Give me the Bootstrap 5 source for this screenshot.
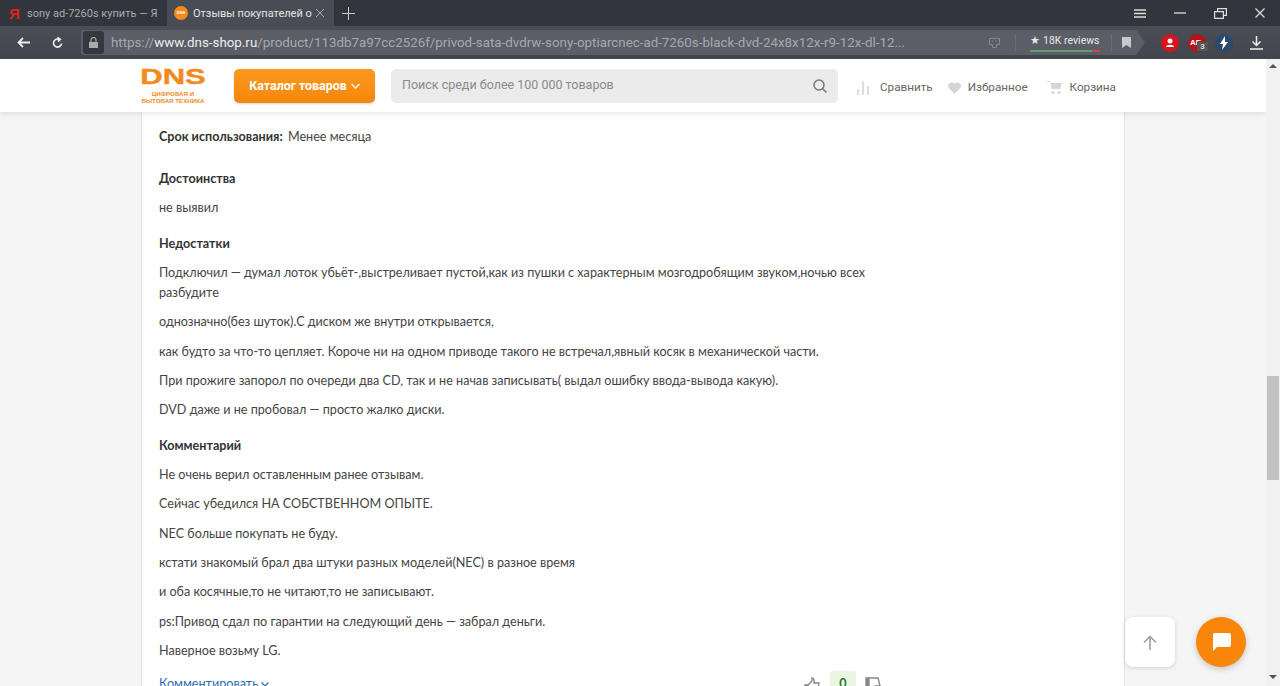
<!doctype html>
<html lang="ru"><head><meta charset="utf-8"><title>Отзывы покупателей</title>
<link href="https://cdn.jsdelivr.net/npm/bootstrap@5.3.0/dist/css/bootstrap.min.css" rel="stylesheet">
<style>
html,body{height:686px;overflow:hidden}
body{font-family:Roboto,"Liberation Sans",sans-serif;color:#333;background:#f5f5f5;position:relative}
.tabbar{height:26px;background:#33353d;color:#a9abb0;font:11px Roboto,sans-serif}
.tabitem{width:167px;height:26px;padding-left:9px}
.tabitem.on{background:#4a4c55;color:#e4e4e6;padding-left:7px}
.tabitem .ya{color:#d8261c;font:700 15px "Liberation Sans",sans-serif;width:18px;flex:none}
.favdot{width:14px;height:14px;border-radius:50%;background:#f28a1e;margin-right:5px;flex:none;color:#fff;font:700 4px/14px "Liberation Sans",sans-serif;text-align:center}
.tabtext{white-space:nowrap;width:122px}
.winbtn{width:40px;display:flex;justify-content:center}
.addrbar{height:33px;background:linear-gradient(#4c4e57,#43454d)}
.navico{width:46px;display:flex;justify-content:center}
.reload{margin-left:5.5px;margin-right:18.5px}
.urlbox{width:1064px;height:25px;background:#5c5e67;border-radius:3px 0 0 3px;clip-path:polygon(0 0,1055px 0,100% 50%,1055px 100%,0 100%);color:#a6a8ad;font:13.35px Roboto,sans-serif;padding-left:2px}
.lockbox{width:21px;height:23px;background:#363840;border-radius:3px;margin-right:7px}
.urltext{width:878px;white-space:nowrap}
.urltext b{font-weight:400;color:#eee}
.sepbar{width:1px;height:17px;background:#6b6d75}
.reviews{color:#e8e8e8;font-size:10.5px;width:70px;line-height:13px;border-bottom:2px solid #5fa06e;margin:0 11px 0 14px;position:relative;padding-bottom:3px;white-space:nowrap;text-align:center}
.reviews::after{content:"";position:absolute;right:0;bottom:-2px;width:8px;height:2px;background:#c4503f}
.extico{width:18px;height:18px;border-radius:50%;position:relative;color:#fff;font:700 8px/17px "Liberation Sans",sans-serif;text-align:left;padding-left:2px}
.extcount{position:absolute;right:-2px;bottom:1px;width:11px;height:9px;background:#555;color:#ddd;font:700 8px/9px "Liberation Sans",sans-serif;text-align:center}
.pagebox{height:627px}
.pagemain{width:1266px;height:627px;overflow:hidden;position:relative}
.sitehead{height:53px;background:#fff;box-shadow:0 2px 6px rgba(0,0,0,.1);padding-left:141px;position:relative;z-index:2}
.logobox{width:64px;color:#f28a1e;text-align:center;margin-right:29px;padding-top:1px}
.logomain{font:900 22.8px/17px "Liberation Sans",sans-serif;transform:scaleX(1.36);height:17px;-webkit-text-stroke:.4px #f28a1e}
.logosub{font:700 6.2px/7px "Liberation Sans",sans-serif;white-space:nowrap;margin-top:5px}
.catbtn{width:141px;height:34px;background:linear-gradient(#fb9a20,#f7860b);border:0;border-radius:5px;color:#fff;font:700 12.4px Roboto,sans-serif;box-shadow:0 1px 2px rgba(0,0,0,.15);padding:0}
.searchbox{width:447px;height:34px;background:#ebebeb;border-radius:5px;margin-left:16px;padding:0 11px;color:#8a8a8a;font-size:12.5px}
.headlink{color:#666;font-size:11.7px;white-space:nowrap;margin-top:5px}
.reviewcard{margin-left:141px;width:984px;background:#fff;border-left:1px solid #e4e4e4;border-right:1px solid #e4e4e4;padding:15px 17px 0;height:574px;overflow:hidden;font-family:Lato,Roboto,sans-serif;font-size:12.6px;line-height:20px;color:#444}
.reviewcard p{margin:0 0 9.3px;width:712px}
.reviewcard h6{font-size:12.6px;line-height:20px;font-weight:700;color:#333;margin:0 0 9.3px}
.sect{margin-top:15.5px}
.sect.first{margin-top:22px}
.sect.last{margin-top:15.5px}
.metaline b{color:#333;margin-right:2px}
.actionrow{margin-top:13px;width:723px;height:30px}
.commentlink{color:#2a6db0;white-space:nowrap}
.voterow{margin-top:-3px}
.votenum{width:26px;height:30px;background:#eaf6e4;color:#1f7a1f;font-weight:700;border-radius:3px;line-height:26px;text-align:center;margin:0 9px}
.voteicon{margin-top:6px}
.scrolltrack{width:14px;height:627px;background:#f1f1f1;padding-top:5px}
.scrollthumb{width:12px;height:104px;background:#c1c1c1;margin:308px 1px 0}
.arrowup,.arrowdown{width:0;height:0;margin:0 auto;border-left:4px solid transparent;border-right:4px solid transparent}
.arrowup{border-bottom:4px solid #555}
.arrowdown{border-top:4px solid #555;margin-top:195px}
.floatbtn{position:absolute;top:617px;width:50px;height:50px;display:flex;align-items:center;justify-content:center;z-index:3}
.floatup{left:1125px;background:#fff;border-radius:8px;box-shadow:0 1px 4px rgba(0,0,0,.15)}
.floatchat{left:1196px;background:#f7860b;border-radius:50%;box-shadow:0 2px 6px rgba(0,0,0,.2)}
</style></head><body>

<div class="tabbar d-flex align-items-center">
  <div class="tabitem d-flex align-items-center"><span class="ya">Я</span><span class="tabtext">sony ad-7260s купить — Я</span></div>
  <div class="tabitem on d-flex align-items-center"><span class="favdot">DNS</span><span class="tabtext">Отзывы покупателей о</span><svg width="10" height="10" viewBox="0 0 10 10" stroke="#aaa" fill="none"><path d="M1 1l8 8M9 1l-8 8"/></svg></div>
  <svg class="ms-2" width="13" height="13" viewBox="0 0 13 13" stroke="#ccc" fill="none"><path d="M6.500 0v13M0 6.500h13"/></svg>
  <div class="d-flex align-items-center ms-auto">
    <div class="winbtn"><svg width="12" height="9" viewBox="0 0 12 9" stroke="#ddd" stroke-width="1.3"><path d="M0 1h12M0 4.500h12M0 8h12"/></svg></div>
    <div class="winbtn"><svg width="12" height="2" viewBox="0 0 12 2" stroke="#ddd" stroke-width="1.3"><path d="M0 1h12"/></svg></div>
    <div class="winbtn"><svg width="13" height="11" viewBox="0 0 13 11" stroke="#ddd" fill="none" stroke-width="1.2"><path d="M.6 3.600h8.800v6.800H.6zM3.600 3.600V.6h8.800v6.800H9.400"/></svg></div>
    <div class="winbtn"><svg width="10" height="10" viewBox="0 0 10 10" stroke="#ddd" stroke-width="1.2"><path d="M.5.500l9 9M9.500.500l-9 9"/></svg></div>
  </div>
</div>

<div class="addrbar d-flex align-items-center">
  <div class="navico"><svg width="13" height="11" viewBox="0 0 13 11" stroke="#eee" fill="none" stroke-width="1.8"><path d="M13 5.500H2M6 1L1.500 5.500 6 10"/></svg></div>
  <svg class="reload" width="11" height="12" viewBox="0 0 11 12" stroke="#eee" fill="none" stroke-width="1.7"><path d="M9.500 6.500A4 4 0 1 1 7 2.300"/><path d="M5.500 .2L8.500 2.300 6 4.800" stroke-width="1.300" fill="#eee"/></svg>
  <div class="urlbox d-flex align-items-center">
    <div class="lockbox d-flex align-items-center justify-content-center"><svg width="9" height="11" viewBox="0 0 9 11" fill="#aaa"><path d="M0 5h9v6H0z"/><path d="M2 5V3a2.500 2.500 0 0 1 5 0v2" fill="none" stroke="#aaa" stroke-width="1.2"/></svg></div>
    <div class="urltext">https://<b>www.dns-shop.ru</b>/product/113db7a97cc2526f/privod-sata-dvdrw-sony-optiarcnec-ad-7260s-black-dvd-24x8x12x-r9-12x-dl-12...</div>
    <svg width="11" height="10" viewBox="0 0 11 10" stroke="#888" fill="none"><path d="M.5.500h10v6h-3v3h-4v-3h-3zM3 3h1M6 3h1"/></svg>
    <div class="sepbar" style="margin-left:15px"></div>
    <div class="reviews">★ 18K reviews</div>
    <div class="sepbar"></div>
    <svg style="margin-left:10px" width="9" height="11" viewBox="0 0 9 11" fill="#c9c9cc"><path d="M0 0h9v11L4.500 8 0 11z"/></svg>
  </div>
  <div class="d-flex align-items-center" style="margin-left:16px">
    <div class="extico d-flex align-items-center justify-content-center" style="background:#d8131b;padding:0"><svg width="10" height="10" viewBox="0 0 10 10" fill="#fff"><circle cx="5" cy="3" r="2.500"/><path d="M1 9c0-3 8-3 8 0z"/></svg></div>
    <div class="extico" style="background:#b3131b;margin-left:9px">AE<span class="extcount">3</span></div>
    <div class="extico d-flex justify-content-center align-items-center" style="background:#2a4a6b;margin-left:9px;padding:0"><svg width="10" height="14" viewBox="0 0 10 14" fill="#fff"><path d="M6 0L1 8h3l-1 6 6-8H6z"/></svg></div>
    <svg width="13" height="14" viewBox="0 0 13 14" stroke="#eee" fill="none" stroke-width="1.500" style="margin-left:16.500px"><path d="M6.500 0v9M2.500 5.500l4 4 4-4M0 13h13"/></svg>
  </div>
</div>

<div class="pagebox d-flex">
  <div class="pagemain">
    <div class="sitehead d-flex align-items-center">
      <div class="logobox"><div class="logomain">DNS</div><div class="logosub">ЦИФРОВАЯ И<br>БЫТОВАЯ ТЕХНИКА</div></div>
      <button class="catbtn d-flex align-items-center justify-content-center gap-1" type="button">Каталог товаров <svg width="9" height="6" viewBox="0 0 9 6" stroke="#fff" fill="none" stroke-width="1.300"><path d="M.5 1l4 4 4-4"/></svg></button>
      <div class="searchbox d-flex align-items-center justify-content-between">Поиск среди более 100 000 товаров
        <svg width="14" height="14" viewBox="0 0 14 14" stroke="#777" fill="none" stroke-width="1.500"><circle cx="6" cy="6" r="5"/><path d="M9.500 9.500L13.500 13.500"/></svg></div>
      <div class="headlink d-flex align-items-center" style="margin-left:19px"><svg width="13" height="14" viewBox="0 0 13 14" fill="#ddd" style="margin-right:10px"><path d="M0 8h2v6H0zM5 0h2v14H5zM10 5h2v9h-2z"/></svg>Сравнить</div>
      <div class="headlink d-flex align-items-center" style="margin-left:15px"><svg width="13" height="12" viewBox="0 0 13 12" fill="#d5d5d5" style="margin-right:7px"><path d="M6.500 12L.8 6A3.400 3.400 0 0 1 6.500 2 3.400 3.400 0 0 1 12.200 6z"/></svg>Избранное</div>
      <div class="headlink d-flex align-items-center" style="margin-left:19px"><svg width="15" height="13" viewBox="0 0 15 13" fill="#d5d5d5" style="margin-right:8px"><path d="M0 0h3l1 2h11l-2 6H5L3 1H0z"/><circle cx="6" cy="11.500" r="1.500"/><circle cx="12" cy="11.500" r="1.500"/></svg>Корзина</div>
    </div>
    <div class="reviewcard">
      <div class="metaline"><b>Срок использования:</b> Менее месяца</div>
      <div class="sect first"><h6>Достоинства</h6><p>не выявил</p></div>
      <div class="sect"><h6>Недостатки</h6>
        <p>Подключил — думал лоток убьёт-,выстреливает пустой,как из пушки с характерным мозгодробящим звуком,ночью всех разбудите</p>
        <p>однозначно(без шуток).С диском же внутри открывается,</p>
        <p>как будто за что-то цепляет. Короче ни на одном приводе такого не встречал,явный косяк в механической части.</p>
        <p>При прожиге запорол по очереди два CD, так и не начав записывать( выдал ошибку ввода-вывода какую).</p>
        <p>DVD даже и не пробовал — просто жалко диски.</p></div>
      <div class="sect last"><h6>Комментарий</h6>
        <p>Не очень верил оставленным ранее отзывам.</p>
        <p>Сейчас убедился НА СОБСТВЕННОМ ОПЫТЕ.</p>
        <p>NEC больше покупать не буду.</p>
        <p>кстати знакомый брал два штуки разных моделей(NEC) в разное время</p>
        <p>и оба косячные,то не читают,то не записывают.</p>
        <p>ps:Привод сдал по гарантии на следующий день — забрал деньги.</p>
        <p>Наверное возьму LG.</p></div>
      <div class="actionrow d-flex justify-content-between align-items-start">
        <span class="commentlink">Комментировать <svg width="8" height="5" viewBox="0 0 8 5" stroke="#2a6db0" fill="none" stroke-width="1.200"><path d="M.5.500L4 4 7.500.500"/></svg></span>
        <div class="voterow d-flex align-items-start">
          <svg class="voteicon" width="17" height="17" viewBox="0 0 17 17" fill="none" stroke="#888" stroke-width="1.400"><path d="M1 8h3v8H1z" fill="#888"/><path d="M4 8l4-4V1c2 0 2.500 2 2 5h5l-1.500 9H4"/></svg>
          <div class="votenum">0</div>
          <svg class="voteicon" width="17" height="17" viewBox="0 0 17 17" fill="none" stroke="#888" stroke-width="1.400"><path d="M1 1h3v9H1z" fill="#888"/><path d="M4 1h9l2 8h-5l-1 6"/></svg>
        </div>
      </div>
    </div>
  </div>
  <div class="scrolltrack">
    <div class="arrowup"></div>
    <div class="scrollthumb"></div>
    <div class="arrowdown"></div>
  </div>
</div>
<div class="floatbtn floatup"><svg width="14" height="15" viewBox="0 0 14 15" stroke="#a3a3a3" fill="none" stroke-width="1.700"><path d="M7 15V1.500M1 7.500l6-6 6 6"/></svg></div>
<div class="floatbtn floatchat"><svg width="19" height="18" viewBox="0 0 19 18" fill="#fff"><path d="M2 0h15a2 2 0 0 1 2 2v10a2 2 0 0 1-2 2H5l-4 4V1z"/></svg></div>
<script src="https://cdn.jsdelivr.net/npm/bootstrap@5.3.0/dist/js/bootstrap.bundle.min.js"></script>
</body></html>
